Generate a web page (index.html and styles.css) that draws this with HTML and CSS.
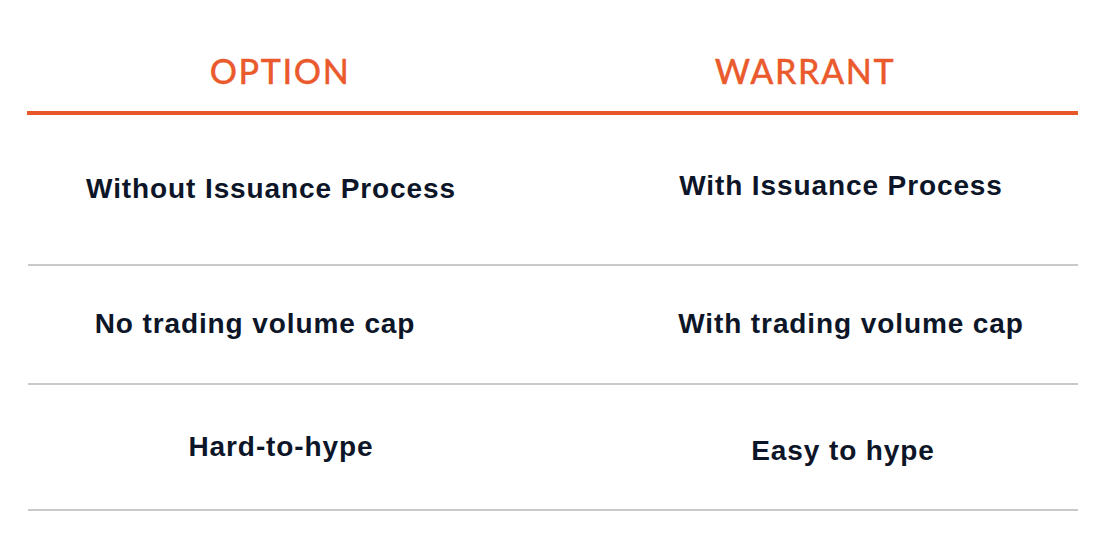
FILE: index.html
```html
<!DOCTYPE html>
<html lang="en">
<head>
<meta charset="utf-8">
<title>Option vs Warrant</title>
<link rel="stylesheet" href="styles.css">
</head>
<body>
<div class="table">
  <div class="row head">
    <div class="cell left head-l"><span class="h">OPTION</span></div>
    <div class="cell right head-r"><span class="h">WARRANT</span></div>
  </div>
  <div class="row r1">
    <div class="cell left">Without Issuance Process</div>
    <div class="cell right r1-r">With Issuance Process</div>
  </div>
  <div class="row r2">
    <div class="cell left r2-l">No trading volume cap</div>
    <div class="cell right r2-r">With trading volume cap</div>
  </div>
  <div class="row r3">
    <div class="cell left r3-l">Hard-to-hype</div>
    <div class="cell right r3-r">Easy to hype</div>
  </div>
</div>
</body>
</html>
```

FILE: styles.css
```css
html, body {
  margin: 0;
  padding: 0;
  background: #ffffff;
}

.table {
  margin-left: 28px;
  width: 1050px;
  display: flex;
  flex-direction: column;
}

.row {
  display: grid;
  grid-template-columns: 486px 564px;
  align-items: center;
  border-bottom: 2px solid #c9c9c9;
  font-family: "Liberation Sans", Arial, sans-serif;
  font-weight: 700;
  font-size: 28px;
  letter-spacing: 0.9px;
  color: #0d1628;
}

.cell {
  text-align: center;
  white-space: nowrap;
}

.right {
  padding-left: 90px;
}

.head {
  height: 115px;
  box-sizing: border-box;
  padding-top: 30px;
  border-bottom: 4px solid #e8572a;
  margin-left: -1px;
}

.h {
  font-family: "Lato", "Open Sans", sans-serif;
  font-weight: 500;
  font-size: 34px;
  letter-spacing: 1.6px;
  color: #ea5a2c;
  -webkit-text-stroke: 0.3px #ea5a2c;
}

.head-l {
  padding-left: 20px;
}

.head-r {
  padding-left: 20px;
}

.r1 {
  height: 151px;
  box-sizing: border-box;
  padding-bottom: 1px;
}

.r1-r {
  margin-top: -6px;
}

.r2 {
  height: 119px;
  box-sizing: border-box;
  padding-bottom: 2px;
}

.r2-l {
  padding-right: 32px;
}

.r2-r {
  padding-left: 110px;
}

.r3 {
  height: 126px;
  box-sizing: border-box;
}

.r3-l {
  padding-left: 20px;
}

.r3-r {
  padding-left: 94px;
  margin-top: 8px;
}
```
